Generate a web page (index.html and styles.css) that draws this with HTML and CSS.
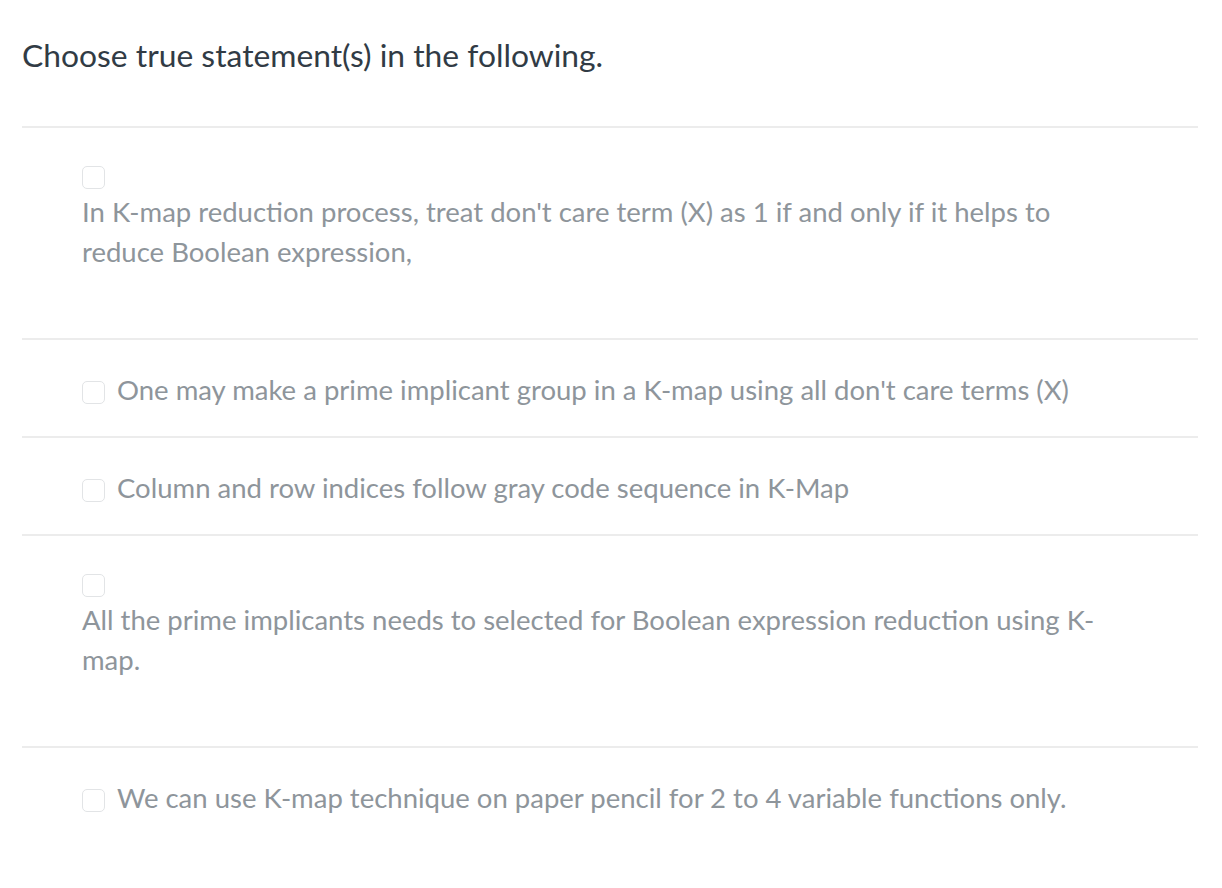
FILE: index.html
```html
<!DOCTYPE html>
<html>
<head>
<meta charset="utf-8">
<link rel="stylesheet" href="styles.css">
</head>
<body>
<div class="page">
  <h1 class="question">Choose true statement(s) in the following.</h1>
  <ul class="options">
    <li class="option option--long">
      <span class="box"></span>
      <span class="label">In K-map reduction process, treat don't care term (X) as 1 if and only if it helps to reduce Boolean expression,</span>
    </li>
    <li class="option">
      <span class="box"></span>
      <span class="label">One may make a prime implicant group in a K-map using all don't care terms (X)</span>
    </li>
    <li class="option">
      <span class="box"></span>
      <span class="label">Column and row indices follow gray code sequence in K-Map</span>
    </li>
    <li class="option option--long">
      <span class="box"></span>
      <span class="label">All the prime implicants needs to selected for Boolean expression reduction using K-map.</span>
    </li>
    <li class="option">
      <span class="box"></span>
      <span class="label">We can use K-map technique on paper pencil for 2 to 4 variable functions only.</span>
    </li>
  </ul>
</div>
</body>
</html>
```

FILE: styles.css
```css
html, body {
  margin: 0;
  padding: 0;
  background: #ffffff;
}

.page {
  padding: 0 24px 0 22px;
  font-family: Lato, "Open Sans", sans-serif;
}

.question {
  margin: 0;
  padding-top: 33px;
  height: 126px;
  box-sizing: border-box;
  font-size: 31.8px;
  font-weight: 400;
  line-height: 44px;
  color: #313b45;
}

.options {
  list-style: none;
  margin: 0;
  padding: 0;
}

.option {
  border-top: 2px solid #ececec;
  display: flex;
  flex-wrap: wrap;
  align-items: center;
  padding: 30px 70px 26px 60px;
  font-size: 27.5px;
  line-height: 40px;
  color: #8e959b;
}

.option--long {
  padding-bottom: 66px;
}

.box {
  flex: none;
  width: 21px;
  height: 21px;
  border: 1px solid #e2e4e6;
  border-radius: 5px;
  margin: 8px 12px 3px 0;
  background: #fff;
}

.option--long .label {
  flex-basis: 100%;
}
```
